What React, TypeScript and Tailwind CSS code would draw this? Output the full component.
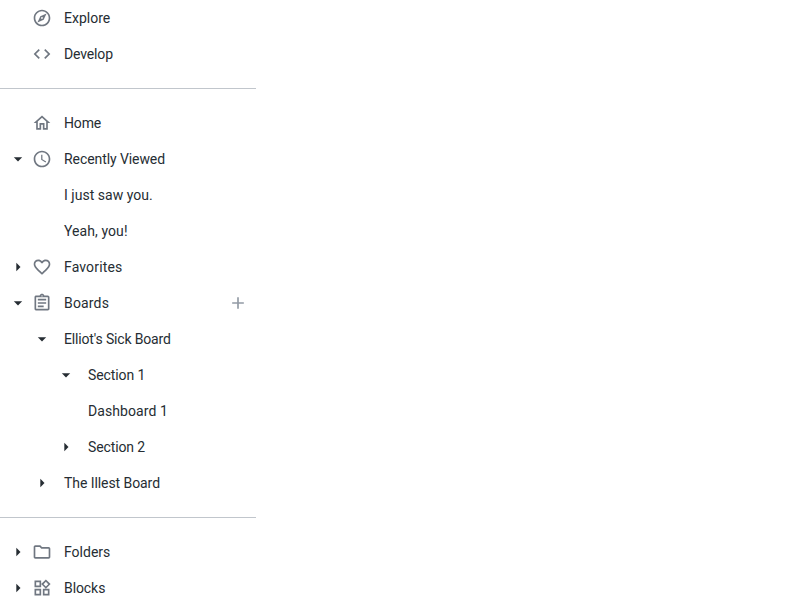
import type { ReactNode } from 'react'
import {
  MdAdd,
  MdArrowDropDown,
  MdArrowRight,
  MdCode,
  MdFavoriteBorder,
  MdOutlineAssignment,
  MdOutlineExplore,
  MdOutlineFolder,
  MdOutlineHome,
  MdOutlineWidgets,
  MdSchedule,
} from 'react-icons/md'

type RowProps = {
  label: string
  icon?: ReactNode
  open?: boolean
  depth?: 0 | 1 | 2
  tracking?: string
  action?: ReactNode
}

const indents = ['pl-2', 'pl-8', 'pl-14']

function Row({ label, icon, open, depth = 0, tracking = '', action }: RowProps) {
  return (
    <li className={`flex h-9 items-center pr-2 ${indents[depth]}`}>
      <span className="size-5 shrink-0 text-[#262d33]">
        {open === true && <MdArrowDropDown size={20} />}
        {open === false && <MdArrowRight size={20} />}
      </span>
      {icon && <span className="ml-1 size-5 shrink-0 text-[#707781]">{icon}</span>}
      <span className={`ml-3 flex-1 whitespace-nowrap ${tracking}`}>{label}</span>
      {action}
    </li>
  )
}

function Divider() {
  return <hr className="my-4 h-px border-0 bg-[#c1c6cc]" />
}

export default function App() {
  return (
    <div className="h-[600px] overflow-hidden bg-white">
      <nav className="w-64 font-['Roboto',sans-serif] text-sm leading-5 text-[#262d33]">
        <ul>
          <Row label="Explore" icon={<MdOutlineExplore size={20} />} />
          <Row label="Develop" icon={<MdCode size={20} />} tracking="tracking-[-0.14px]" />
        </ul>
        <Divider />
        <ul>
          <Row label="Home" icon={<MdOutlineHome size={20} />} tracking="tracking-[-0.15px]" />
          <Row label="Recently Viewed" icon={<MdSchedule size={20} />} open tracking="tracking-[-0.08px]" />
          <Row label="I just saw you." depth={1} tracking="tracking-[0.03px]" />
          <Row label="Yeah, you!" depth={1} tracking="tracking-[0.08px]" />
          <Row label="Favorites" icon={<MdFavoriteBorder size={20} />} open={false} tracking="tracking-[0.14px]" />
          <Row
            label="Boards"
            icon={<MdOutlineAssignment size={20} />}
            open
            tracking="tracking-[0.16px]"
            action={
              <button aria-label="Add board" className="text-[#939ba5]">
                <MdAdd size={20} />
              </button>
            }
          />
          <Row label="Elliot's Sick Board" depth={1} open tracking="tracking-[-0.16px]" />
          <Row label="Section 1" depth={2} open tracking="tracking-[-0.1px]" />
          <Row label="Dashboard 1" depth={2} tracking="tracking-[0.08px]" />
          <Row label="Section 2" depth={2} open={false} tracking="tracking-[-0.12px]" />
          <Row label="The Illest Board" depth={1} open={false} tracking="tracking-[-0.07px]" />
        </ul>
        <Divider />
        <ul>
          <Row label="Folders" icon={<MdOutlineFolder size={20} />} open={false} />
          <Row label="Blocks" icon={<MdOutlineWidgets size={20} />} open={false} tracking="tracking-[-0.08px]" />
        </ul>
      </nav>
    </div>
  )
}
